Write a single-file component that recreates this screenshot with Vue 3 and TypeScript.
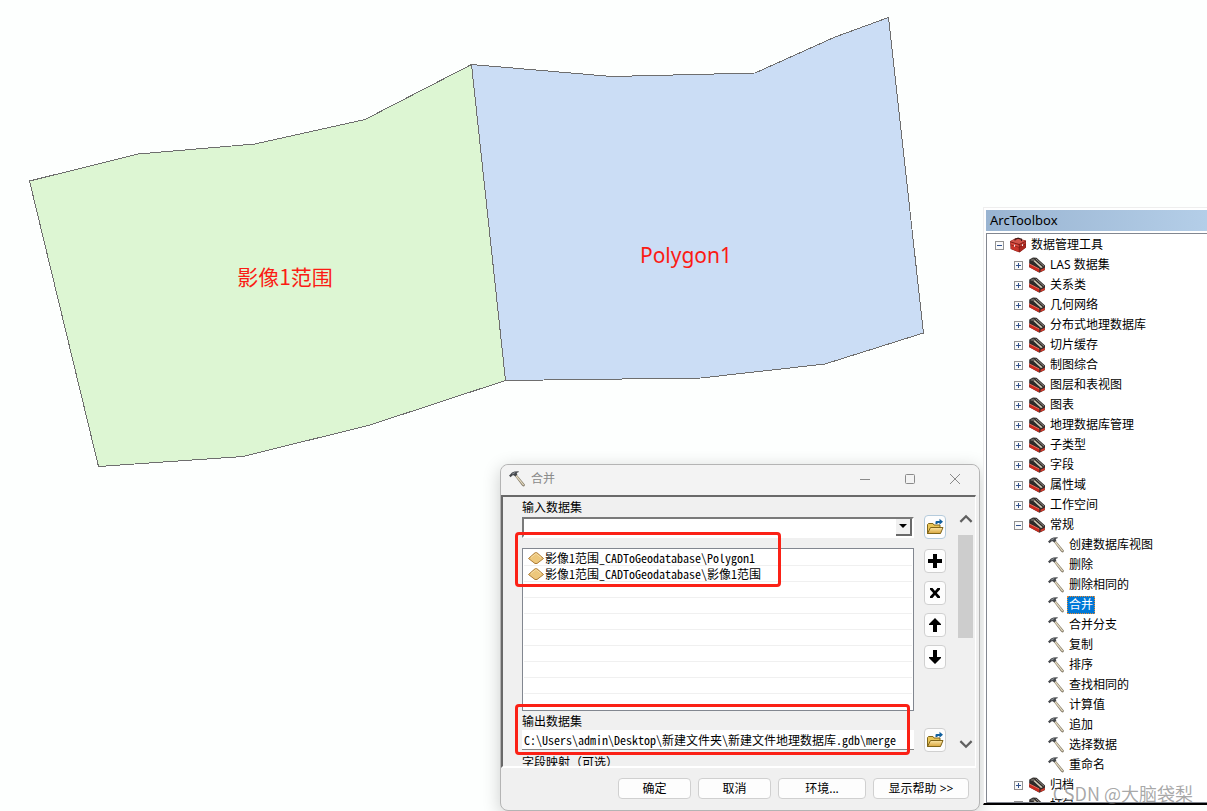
<script setup lang="ts">
import { ref } from 'vue'

interface TreeNode {
  label: string
  level: number
  kind: 'box' | 'set' | 'tool'
  open?: boolean
  selected?: boolean
}

const sets = (labels: string[]): TreeNode[] => labels.map((label) => ({ label, level: 1, kind: 'set' }))
const tools = (labels: string[]): TreeNode[] =>
  labels.map((label) => ({ label, level: 2, kind: 'tool', selected: label === '合并' }))

const nodes: TreeNode[] = [
  { label: '数据管理工具', level: 0, kind: 'box', open: true },
  ...sets(['LAS 数据集', '关系类', '几何网络', '分布式地理数据库', '切片缓存', '制图综合', '图层和表视图', '图表', '地理数据库管理', '子类型', '字段', '属性域', '工作空间']),
  { label: '常规', level: 1, kind: 'set', open: true },
  ...tools(['创建数据库视图', '删除', '删除相同的', '合并', '合并分支', '复制', '排序', '查找相同的', '计算值', '追加', '选择数据', '重命名']),
  ...sets(['归档', '打包']),
]

const inputDataset = ref('')
const outputDataset = ref('C:\\Users\\admin\\Desktop\\新建文件夹\\新建文件地理数据库.gdb\\merge')
const datasets = ['影像1范围_CADToGeodatabase\\Polygon1', '影像1范围_CADToGeodatabase\\影像1范围']
const listActions = [
  { name: '添加', path: 'M6 1h4v5h5v4h-5v5H6v-5H1V6h5z' },
  { name: '移除', path: 'M3 3h2.500L8 5.900 10.500 3H13v1.500L9.800 8l3.200 3.500V13h-2.500L8 10.100 5.500 13H3v-1.500L6.200 8 3 4.500z' },
  { name: '上移', path: 'M8 1l6 6v1h-4v7H6V8H2V7z' },
  { name: '下移', path: 'M8 15l6-6V8h-4V1H6v7H2v1z' },
]
</script>

<template>
  <main class="desktop">
    <svg width="0" height="0" class="defs" aria-hidden="true">
      <defs>
        <linearGradient id="gold" x1="0" y1="0" x2="0" y2="1">
          <stop offset="0" stop-color="#fbe6a8" />
          <stop offset="1" stop-color="#d9a63c" />
        </linearGradient>
        <symbol id="hammer" viewBox="0 0 16 16">
          <path d="M5.500 4.500L7.300 3.300 15.600 13.300 15.700 15 14.300 15.500 12.800 14.300z" fill="#7d7462" />
          <path d="M6.800 4.500L14.700 14.200" stroke="#e3d9bf" stroke-width="1.300" />
          <path d="M0 4.600L1.200 3.600 3 1.600 5.500.6 9.500.3 9.900 1 7.600 2 8.400 3.500 6.200 5.500 4.800 4.200 3.300 4.400 1.600 6.200z" fill="#45484c" />
          <path d="M3.300 2.900L6.200 1.500" fill="none" stroke="#9fa5ab" stroke-width=".9" />
        </symbol>
        <symbol id="toolset" viewBox="0 0 16 16">
          <path d="M.3 2.600L4 .6 7.500.7 16 8.500 15.900 13 10.500 15.800 0 10z" fill="#2f2b29" />
          <path d="M1 3l3.200-1.500L6 2.200 3.200 4.100z" fill="#6d6964" />
          <path d="M4.200 3.800L5.800 3.200 13.600 10.200 12 11z" fill="#d8cfba" />
          <path d="M6.700 1.800L15 9.200" stroke="#918d87" stroke-width="1" />
          <path d="M0 6.700L10.300 12v3.600L.3 10.200z" fill="#c92d20" />
          <path d="M0 6.700L10.300 12" stroke="#ec7362" stroke-width=".9" />
          <path d="M11.500 12.800L15.800 10.700v2.300L11.500 15z" fill="#d0382b" />
        </symbol>
        <symbol id="toolbox" viewBox="0 0 16 16">
          <path d="M0 4.200L6 1l10 2.500v7L9.500 15.500.6 12z" fill="#7c1b17" />
          <path d="M.2 4.300L6.500 1.200 15.700 3.700 9.200 7z" fill="#d2544a" />
          <path d="M.3 5.200l8.500 2.700v2L.5 7.300z" fill="#dc4a3e" />
          <path d="M.7 8l8.100 2.600V15L1 11.800z" fill="#c9342a" />
          <path d="M9.700 7.800l6-3.200v1.900l-6 3.300z" fill="#bd382e" />
          <path d="M9.700 10.600l6-3.300v3.100l-6 4.500z" fill="#a92720" />
          <path d="M5 3.600V2.400l3-1.200 3.500 1v1.900" fill="none" stroke="#3d1917" stroke-width="1.100" />
          <path d="M4.500 7.700v2M12.500 7.200v1.800" stroke="#eee" stroke-width="1.100" />
        </symbol>
        <symbol id="folder" viewBox="0 0 18 18">
          <path d="M1.500 15.500v-9l1-1H7l1 1.500h6v8.500z" fill="#e8c557" stroke="#806519" />
          <path d="M1.500 15.500L4.500 9.500H17l-2.500 6z" fill="url(#gold)" stroke="#806519" />
          <path d="M9.500 6V4q0-1 1-1h3V.8L17 3.700l-3.500 3V5h-2v1z" fill="#115f9e" />
        </symbol>
      </defs>
    </svg>

    <svg class="map" width="960" height="500" viewBox="0 0 960 500" role="img" aria-label="影像范围图">
      <polygon class="shape green" points="29.500,181 138,154 255,144 365,119.500 471.500,64.500 505.500,380.500 370,425 243,456.500 98.500,466.500" />
      <polygon class="shape blue" points="471.500,64.500 612,76.500 755,73 835,37 888.500,17.500 923.500,333 825,364 701,378 505.500,380.500" />
      <text class="map-label" x="285" y="285">影像1范围</text>
      <text class="map-label latin" x="686" y="263">Polygon1</text>
    </svg>

    <section class="dialog" aria-labelledby="dialog-title">
      <header class="titlebar">
        <svg class="icon"><use href="#hammer" /></svg>
        <h1 id="dialog-title">合并</h1>
        <button type="button" aria-label="最小化"><svg viewBox="0 0 12 12"><path d="M1 6.500h10" /></svg></button>
        <button type="button" aria-label="最大化"><svg viewBox="0 0 12 12"><rect x="1.500" y="1.500" width="9" height="9" rx="1" /></svg></button>
        <button type="button" aria-label="关闭"><svg viewBox="0 0 12 12"><path d="M1 1l10 10M11 1L1 11" /></svg></button>
      </header>

      <div class="body">
        <form class="fields" @submit.prevent>
          <label class="caption" for="input-dataset">输入数据集</label>
          <div class="combo">
            <select id="input-dataset" v-model="inputDataset"><option value=""></option></select>
            <span class="combo-arrow"><svg viewBox="0 0 8 4"><path d="M0 0h8L4 4z" /></svg></span>
          </div>
          <button type="button" class="square browse" aria-label="浏览输入"><svg class="folder"><use href="#folder" /></svg></button>
          <ul class="datasets">
            <li v-for="item in datasets" :key="item">
              <svg viewBox="0 0 16 12"><path d="M.5 6.500L7 .8h2l6.500 5.700-6.500 5H7z" fill="#edc77c" stroke="#ad7b35" /><path d="M3 5.500l5-4 5 4" fill="none" stroke="#f8dfa5" /></svg>
              <span>{{ item }}</span>
            </li>
            <li v-for="n in 7" :key="n"></li>
          </ul>
          <div class="actions">
            <button v-for="a in listActions" :key="a.name" type="button" class="square" :aria-label="a.name">
              <svg class="glyph" viewBox="0 0 16 16"><path :d="a.path" /></svg>
            </button>
          </div>
          <label class="caption output-caption" for="output-dataset">输出数据集</label>
          <input id="output-dataset" v-model="outputDataset" type="text" class="output" />
          <button type="button" class="square output-browse" aria-label="浏览输出"><svg class="folder"><use href="#folder" /></svg></button>
          <p class="caption mapping">字段映射（可选）</p>
          <div class="mark mark-inputs"></div>
          <div class="mark mark-output"></div>
        </form>
        <div class="scrollbar">
          <svg viewBox="0 0 12 8"><path d="M1 7l5-5 5 5" /></svg>
          <div class="track"><div class="thumb"></div></div>
          <svg viewBox="0 0 12 8"><path d="M1 1l5 5 5-5" /></svg>
        </div>
      </div>

      <footer class="buttons">
        <button type="button">确定</button>
        <button type="button">取消</button>
        <button type="button" class="medium">环境...</button>
        <button type="button" class="wide">显示帮助 &gt;&gt;</button>
      </footer>
    </section>

    <aside class="toolbox">
      <h2>ArcToolbox</h2>
      <ul class="tree">
        <li v-for="node in nodes" :key="node.label" :class="['node', 'level-' + node.level]">
          <button v-if="node.kind !== 'tool'" type="button" class="expander" :aria-label="node.label" :aria-expanded="!!node.open">
            <svg viewBox="0 0 9 9"><path d="M2 4.500h5" /><path v-if="!node.open" d="M4.500 2v5" /></svg>
          </button>
          <svg class="icon"><use :href="node.kind === 'box' ? '#toolbox' : node.kind === 'set' ? '#toolset' : '#hammer'" /></svg>
          <span :class="['name', { selected: node.selected }]">{{ node.label }}</span>
        </li>
      </ul>
    </aside>
    <p class="watermark">CSDN @大脑袋梨</p>
  </main>
</template>

<style>
body {
  margin: 0;
}
</style>

<style scoped>
* {
  box-sizing: border-box;
}
.desktop {
  position: relative;
  height: 100vh;
  min-height: 600px;
  overflow: hidden;
  background: #fdfffe;
  color: #000;
  font: 12px/16px "Noto Sans", "Noto Sans CJK SC", sans-serif;
}
h1, h2, p, ul {
  margin: 0;
  padding: 0;
  font-size: inherit;
  font-weight: 400;
  list-style: none;
}
button {
  display: flex;
  align-items: center;
  justify-content: center;
  padding: 0;
  font: inherit;
  color: inherit;
}
svg {
  flex: none;
}
.defs {
  position: absolute;
}
.map {
  display: block;
}
.shape {
  stroke: #6e6e6e;
  stroke-width: 1;
  shape-rendering: crispEdges;
}
.green {
  fill: #ddf6d3;
}
.blue {
  fill: #cbddf5;
}
.map-label {
  fill: #fb1b14;
  font: 21px "Noto Sans CJK SC", sans-serif;
  text-anchor: middle;
}
.latin {
  font-family: "Noto Sans", sans-serif;
}
.icon {
  width: 16px;
  height: 16px;
}

/* Merge dialog */
.dialog {
  position: absolute;
  left: 500px;
  top: 464px;
  bottom: 0;
  width: 480px;
  display: flex;
  flex-direction: column;
  border: 1px solid #b4b4b4;
  border-radius: 8px;
  background: #f0f0f0;
  box-shadow: 0 4px 18px rgba(0, 0, 0, 0.2);
}
.titlebar {
  display: flex;
  align-items: center;
  height: 30px;
  flex: none;
  padding: 0 2px 2px 8px;
  border-radius: 8px 8px 0 0;
  background: #f3f3f3;
}
.titlebar h1 {
  flex: 1;
  margin-left: 6px;
  color: #8a8a8a;
}
.titlebar button {
  width: 45px;
  height: 28px;
  border: 0;
  background: none;
}
.titlebar button svg {
  width: 12px;
  height: 12px;
  fill: none;
  stroke: #8a8a8a;
}
.body {
  flex: 1;
  min-height: 0;
  display: flex;
  justify-content: space-between;
  overflow: hidden;
  margin-right: 3px;
  border-top: 2px solid #696969;
  border-left: 2px solid #696969;
  border-right: 1px solid #fff;
  border-bottom: 2px solid #fff;
}
.fields {
  position: relative;
  display: grid;
  grid-template-columns: 392px 22px;
  grid-template-rows: 18px 24px 9px 163px 17px 24px 18px;
  column-gap: 10px;
  padding-left: 19px;
  font-family: "Noto Sans CJK SC", sans-serif;
}
.caption {
  grid-column: 1 / -1;
  line-height: 20px;
  white-space: nowrap;
}
.combo {
  position: relative;
  height: 21px;
  align-self: center;
}
.combo select {
  width: 100%;
  height: 100%;
  appearance: none;
  border: 2px solid #fff;
  border-top-color: #7a7a7a;
  border-left-color: #7a7a7a;
  border-radius: 0;
  background: #fff;
}
.combo-arrow {
  position: absolute;
  right: 2px;
  top: 2px;
  bottom: 2px;
  width: 16px;
  display: flex;
  align-items: center;
  justify-content: center;
  border-right: 2px solid #696969;
  border-bottom: 2px solid #696969;
  background: #f0f0f0;
  pointer-events: none;
}
.combo-arrow svg {
  width: 8px;
  height: 4px;
}
.square {
  width: 22px;
  height: 24px;
  border: 1px solid #d0d0d0;
  border-radius: 4px;
  background: #fdfdfd;
}
.browse {
  border-color: #b5cbdc;
}
.folder {
  width: 18px;
  height: 18px;
}
.glyph {
  width: 16px;
  height: 16px;
}
.datasets {
  grid-row: 4;
  grid-column: 1;
  height: 163px;
  overflow: hidden;
  padding: 1px;
  border: 1px solid #828790;
  background: #fff;
}
.datasets li {
  display: flex;
  align-items: center;
  height: 16px;
  padding-left: 4px;
  border-bottom: 1px solid #f0f0f0;
  line-height: 16px;
}
.datasets svg {
  width: 16px;
  height: 12px;
  margin-right: 1px;
}
.datasets span, .output {
  font-family: "Noto Sans CJK SC", sans-serif;
  font-feature-settings: "hwid";
  white-space: nowrap;
}
.actions {
  grid-row: 4;
  grid-column: 2;
  display: flex;
  flex-direction: column;
  justify-content: space-between;
  height: 120px;
  margin-top: 1px;
}
.output-caption {
  grid-row: 5;
}
.output {
  grid-row: 6;
  grid-column: 1;
  width: 100%;
  height: 20px;
  align-self: center;
  padding: 0 2px;
  border: 0;
  border-bottom: 1px solid #868686;
  background: #fff;
  font-size: 12px;
}
.output-browse {
  grid-row: 6;
  grid-column: 2;
}
.mapping {
  grid-row: 7;
}
.mark {
  position: absolute;
  border: 3px solid #fb2116;
  border-radius: 4px;
  pointer-events: none;
}
.mark-inputs {
  left: 12px;
  top: 35px;
  width: 266px;
  height: 55px;
}
.mark-output {
  left: 12px;
  top: 207px;
  width: 395px;
  height: 51px;
}
.scrollbar {
  display: flex;
  flex-direction: column;
  align-items: center;
  width: 18px;
  padding: 17px 2px 17px 1px;
}
.scrollbar svg {
  width: 14px;
  height: 9px;
  fill: none;
  stroke: #606060;
  stroke-width: 2;
}
.track {
  flex: 1;
  width: 15px;
  margin: 12px 0 0;
}
.thumb {
  height: 50%;
  background: #cdcdcd;
}
.buttons {
  display: flex;
  flex: none;
  justify-content: flex-end;
  gap: 7px;
  height: 42px;
  padding: 10px 10px 0 0;
}
.buttons button {
  width: 73px;
  height: 21px;
  border: 1px solid #d0d0d0;
  border-radius: 4px;
  background: #fdfdfd;
}
.buttons .medium {
  width: 88px;
}
.buttons .wide {
  width: 96px;
}

/* Toolbox tree */
.toolbox {
  position: absolute;
  left: 983px;
  right: 0;
  top: 207px;
  bottom: 6px;
  display: flex;
  flex-direction: column;
  padding: 2px 0 0 2px;
  border-top: 1px solid #eee;
  border-left: 1px solid #eee;
  border-bottom: 2px solid #000;
  background: #fff;
}
.toolbox h2 {
  height: 21px;
  flex: none;
  margin-bottom: 2px;
  padding-left: 4px;
  background: linear-gradient(90deg, #99b4d1, #b4cee8);
  font-size: 13px;
  line-height: 20px;
}
.tree {
  flex: 1;
  min-height: 0;
  overflow: hidden;
  padding-top: 1px;
  border: 1px solid #828790;
  border-right: 0;
}
.node {
  display: flex;
  align-items: center;
  gap: 6px;
  height: 20px;
  padding-left: 8px;
  white-space: nowrap;
}
.level-1 {
  padding-left: 27px;
}
.level-2 {
  padding-left: 61px;
}
.expander {
  width: 9px;
  height: 9px;
  flex: none;
  border: 1px solid #929292;
  background: #fafafa;
}
.expander svg {
  width: 9px;
  height: 9px;
  margin: -1px;
  stroke: #31528e;
}
.node .name {
  margin-left: -3px;
  height: 18px;
  padding: 0 1px;
  border: 1px solid transparent;
}
.node .selected {
  border: 1px dotted #e78b32;
  background: #0078d7;
  color: #fff;
}
.watermark {
  position: absolute;
  right: 14px;
  bottom: 5px;
  color: rgba(110, 110, 110, 0.6);
  font-family: "Noto Sans CJK SC", sans-serif;
  font-size: 18px;
  line-height: 26px;
}
</style>
